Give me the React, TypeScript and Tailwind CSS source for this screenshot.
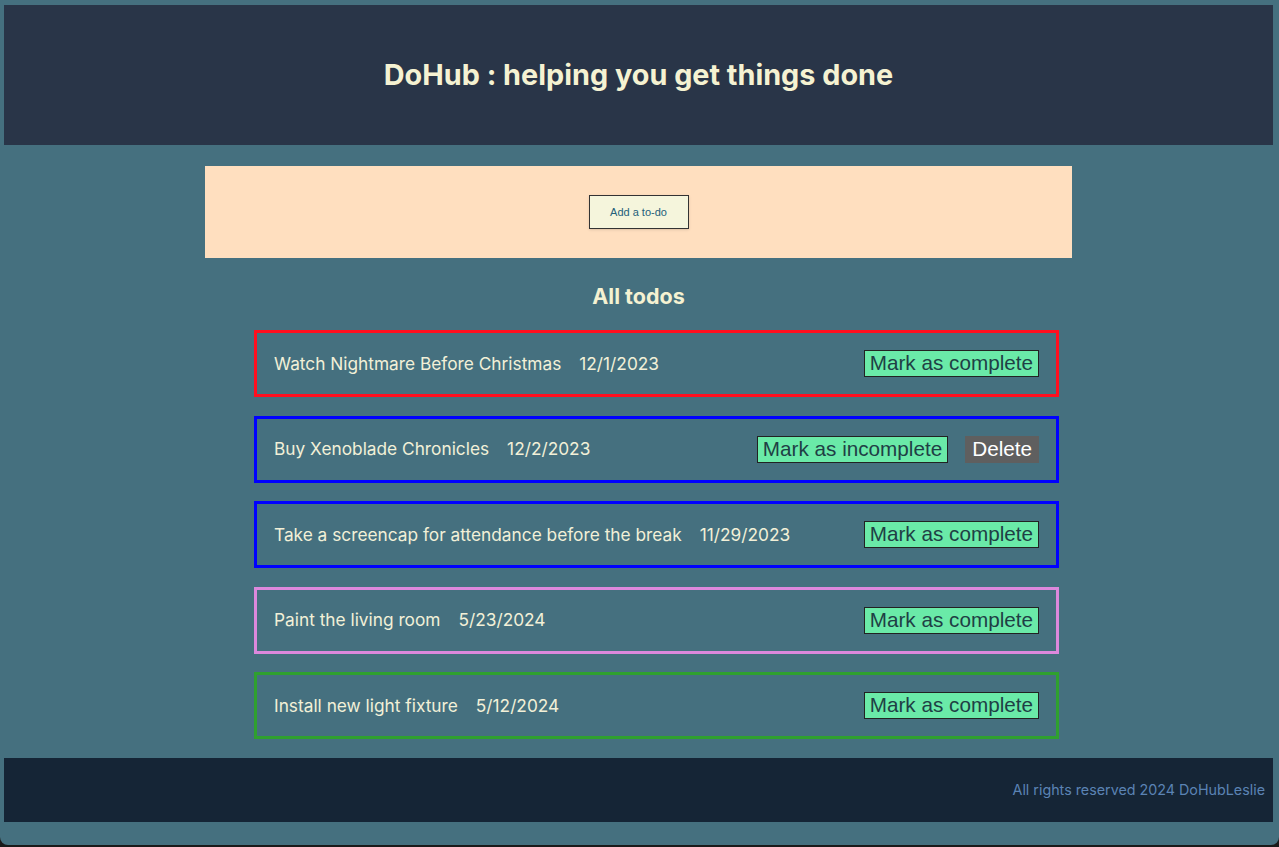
import React from 'react';

interface Todo {
  title: string;
  date: string;
  border: string;
  done: boolean;
}

const todos: Todo[] = [
  { title: 'Watch Nightmare Before Christmas', date: '12/1/2023', border: 'border-[#ff0f1f]', done: false },
  { title: 'Buy Xenoblade Chronicles', date: '12/2/2023', border: 'border-[#0000ff]', done: true },
  { title: 'Take a screencap for attendance before the break', date: '11/29/2023', border: 'border-[#0000ff]', done: false },
  { title: 'Paint the living room', date: '5/23/2024', border: 'border-[#dd88dd]', done: false },
  { title: 'Install new light fixture', date: '5/12/2024', border: 'border-[#2fa02f]', done: false },
];

function TodoRow({ todo }: { todo: Todo }) {
  return (
    <div className={`flex items-center h-[67px] border-[3px] ${todo.border} px-[17px]`}>
      <span className="text-[17.3px] text-[#f2f0d8]">{todo.title}</span>
      <span className="ml-[18px] text-[17.3px] text-[#f2f0d8]">{todo.date}</span>
      <div className="ml-auto flex items-center gap-[17px] font-['Liberation_Sans',Arial,sans-serif]">
        <button className="h-[27px] px-[5px] bg-[#6aeaa8] border border-[#222] text-[20.7px] leading-none text-[#1f3f45]">
          {todo.done ? 'Mark as incomplete' : 'Mark as complete'}
        </button>
        {todo.done && (
          <button className="h-[27px] px-[7px] bg-[#5f5f5f] text-[20.7px] leading-none text-white">Delete</button>
        )}
      </div>
    </div>
  );
}

export default function App() {
  return (
    <div className="bg-[#1a1a1a] h-[847px]">
      <div className="h-[845px] bg-[#45707f] rounded-b-[8px] pl-[4px] pr-[6px] pt-[5px] font-['Inter',sans-serif] flex flex-col">
        <header className="h-[140px] bg-[#293548] flex items-center justify-center">
          <h1 className="text-[28.8px] font-bold text-[#f5f2d2]">DoHub : helping you get things done</h1>
        </header>

        <main className="flex-1 flex flex-col items-center pt-[21px]">
          <div className="w-[867px] h-[92px] bg-[#ffdfbf] flex items-center justify-center">
            <button className="w-[100px] h-[34px] bg-[#f5f5dc] border border-[#333] text-[11px] text-[#23607a] font-['Liberation_Sans',Arial,sans-serif] shadow-sm">
              Add a to-do
            </button>
          </div>

          <h2 className="mt-[25px] text-[21.5px] font-bold text-[#f5f2d2] leading-[26px]">All todos</h2>

          <div className="mt-[21px] ml-[36px] w-[805px] flex flex-col gap-[18.5px]">
            {todos.map((t, i) => (
              <TodoRow key={i} todo={t} />
            ))}
          </div>
        </main>

        <footer className="mt-[18px] h-[64px] bg-[#152536] flex items-center justify-end pr-[8px] mb-[23px]">
          <span className="text-[14.3px] text-[#5b83b4]">All rights reserved 2024 DoHubLeslie</span>
        </footer>
      </div>
    </div>
  );
}
